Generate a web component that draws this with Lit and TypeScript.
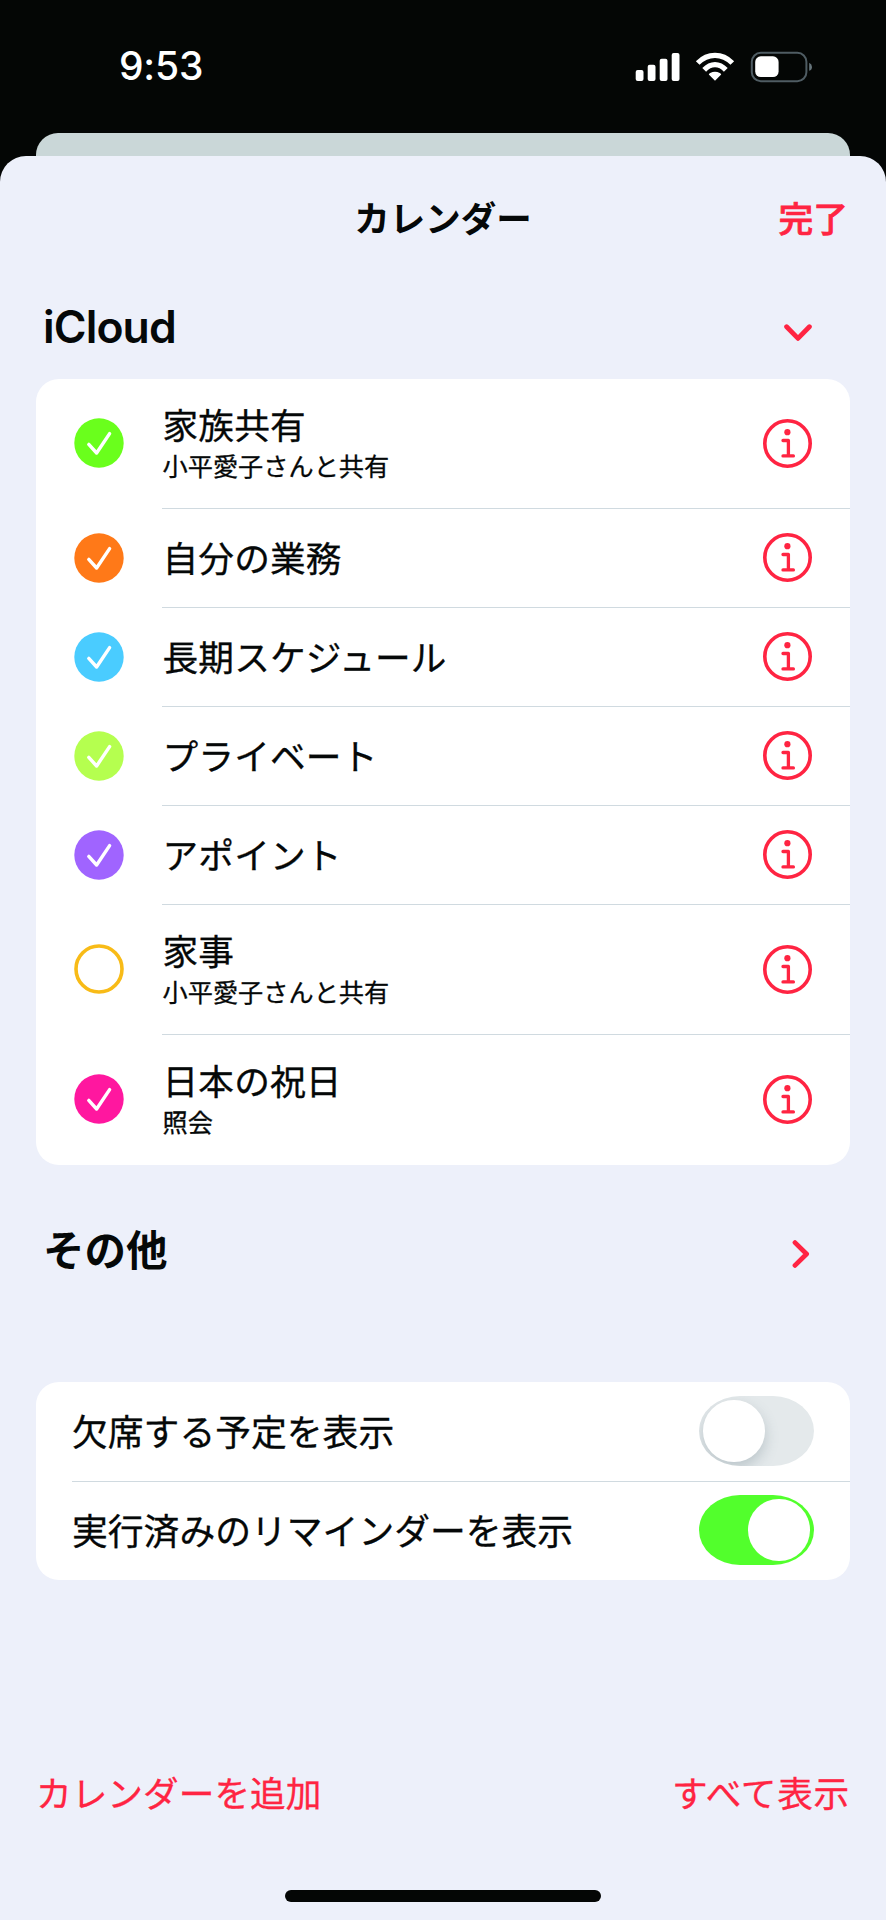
import { LitElement, html, css, svg, nothing } from "lit";
import { customElement, property, state } from "lit/decorators.js";
import { classMap } from "lit/directives/class-map.js";

interface CalendarEntry {
  name: string;
  note?: string;
  color: string;
  checked: boolean;
}

const CALENDARS: CalendarEntry[] = [
  { name: "家族共有", note: "小平愛子さんと共有", color: "#6aff1c", checked: true },
  { name: "自分の業務", color: "#ff7918", checked: true },
  { name: "長期スケジュール", color: "#4accff", checked: true },
  { name: "プライベート", color: "#b5ff4f", checked: true },
  { name: "アポイント", color: "#a064ff", checked: true },
  { name: "家事", note: "小平愛子さんと共有", color: "#f8bb17", checked: false },
  { name: "日本の祝日", note: "照会", color: "#ff179f", checked: true },
];

@customElement("status-bar")
class StatusBar extends LitElement {
  static styles = css`
    :host {
      display: flex;
      justify-content: space-between;
      align-items: center;
      height: 133px;
      padding: 0 73px 0 119px;
      box-sizing: border-box;
    }
    .time {
      margin-bottom: 2px;
      font: 500 39px/46px Inter, sans-serif;
      letter-spacing: -0.2px;
      color: #fff;
    }
    .icons {
      display: block;
    }
  `;
  render() {
    return html`
      <span class="time">9:53</span>
      <svg class="icons" width="178" height="32" viewBox="635 50 178 32">
        <g fill="#fff">
          <rect x="635.7" y="69" width="7.8" height="11" rx="2" />
          <rect x="647.7" y="63.7" width="7.8" height="16.3" rx="2" />
          <rect x="659.7" y="57.8" width="7.8" height="22.2" rx="2" />
          <rect x="671.7" y="52" width="7.8" height="28" rx="2" />
          <path d="M715 79.8 L708.8 73.6 Q708.9 72.5 710.2 72 Q715 69.4 719.8 72 Q721.1 72.5 721.2 73.6 Z" />
        </g>
        <g fill="none" stroke="#fff" stroke-width="5.2">
          <path d="M704.2 68.9 Q709.1 63.7 715 63.7 Q720.9 63.7 725.8 68.9" />
          <path d="M697.7 62 Q705.3 54.4 715 54.4 Q724.7 54.4 732.3 62" />
        </g>
        <rect x="751.8" y="51.8" width="54.6" height="28.4" rx="9" fill="none" stroke="#4f5c63" stroke-width="2" />
        <rect x="755.2" y="55.3" width="23.4" height="20.8" rx="5.6" fill="#fff" />
        <path d="M809.2 61.7 Q812 63 812 66 Q812 69 809.2 69.8 Z" fill="#66747b" />
      </svg>
    `;
  }
}

@customElement("calendar-row")
class CalendarRow extends LitElement {
  @property({ attribute: false }) entry!: CalendarEntry;

  static styles = css`
    :host {
      display: flex;
      align-items: center;
      padding-left: 38px;
    }
    .mark {
      flex: none;
      display: block;
      margin-right: 38.5px;
    }
    .body {
      flex: 1;
      align-self: stretch;
      display: flex;
      align-items: center;
      justify-content: space-between;
      padding-right: 38.5px;
    }
    .name {
      font-size: 35.7px;
      line-height: 44px;
      letter-spacing: 0.15px;
    }
    .note {
      padding-top: 1px;
      font-size: 25.2px;
      line-height: 36px;
    }
    .labels {
      margin-bottom: 2px;
      white-space: nowrap;
      -webkit-text-stroke: 0.3px currentColor;
    }
    .info {
      flex: none;
      display: block;
    }
  `;
  render() {
    const { name, note, color, checked } = this.entry;
    return html`
      <svg class="mark" width="50" height="50" viewBox="0 0 50 50">
        ${checked
          ? svg`<circle cx="25" cy="25" r="24.7" fill=${color} />
              <path d="M14.8 26.4 L22.6 35 L35.6 15.6" fill="none" stroke="#fff" stroke-width="3.4"
                stroke-linecap="round" stroke-linejoin="round" />`
          : svg`<circle cx="25" cy="25" r="23" fill="none" stroke=${color} stroke-width="3.6" />`}
      </svg>
      <div class="body">
        <div class="labels">
          <div class="name">${name}</div>
          ${note ? html`<div class="note">${note}</div>` : nothing}
        </div>
        <svg class="info" width="49" height="49" viewBox="0 0 49 49">
          <circle cx="24.5" cy="24.5" r="22.7" fill="none" stroke="#ff2442" stroke-width="3.6" />
          <circle cx="24.4" cy="13.2" r="3.1" fill="#ff2442" />
          <path d="M20 21.5 H25.4 V36.9 M20 36.9 H30.4" fill="none" stroke="#ff2442" stroke-width="3.3"
            stroke-linecap="round" stroke-linejoin="round" />
        </svg>
      </div>
    `;
  }
}

@customElement("toggle-switch")
class ToggleSwitch extends LitElement {
  @property({ type: Boolean }) on = false;

  static styles = css`
    .track {
      display: flex;
      align-items: center;
      width: 115px;
      height: 70px;
      padding: 0 4.2px;
      box-sizing: border-box;
      border-radius: 41px / 35px;
      background: #e4e9eb;
      overflow: hidden;
    }
    .track.on {
      justify-content: flex-end;
      background: #52ff2c;
    }
    .knob {
      width: 61.5px;
      height: 61.5px;
      border-radius: 50%;
      background: #fff;
      box-shadow: 0 6px 14px rgba(80, 105, 115, 0.28);
    }
    .on .knob {
      box-shadow: none;
    }
  `;
  render() {
    return html`<div class=${classMap({ track: true, on: this.on })}><div class="knob"></div></div>`;
  }
}

@customElement("app-root")
class AppRoot extends LitElement {
  @state() private calendars = CALENDARS;

  static styles = css`
    :host {
      display: block;
      width: 886px;
      height: 1920px;
      overflow: hidden;
      background: #040605;
      color: #050808;
      font-family: "Noto Sans CJK JP", sans-serif;
    }
    .behind {
      height: 44px;
      margin: 0 36px -21.5px;
      border-radius: 22px 22px 0 0;
      background: #cad7d8;
    }
    .sheet {
      position: relative;
      display: flex;
      flex-direction: column;
      height: 1764.5px;
      box-sizing: border-box;
      padding: 0 36px;
      border-radius: 26px 26px 0 0;
      background: #edf0fa;
    }
    .nav {
      display: grid;
      grid-template-columns: 1fr auto 1fr;
      align-items: center;
      height: 119px;
      padding-top: 2px;
      font-size: 35.5px;
      font-weight: 700;
      line-height: 52px;
    }
    .title {
      grid-column: 2;
    }
    .done {
      justify-self: end;
      padding-right: 2px;
      font-size: 34.8px;
      font-weight: 500;
      -webkit-text-stroke: 0.7px currentColor;
      color: #ff2442;
    }
    .section {
      display: flex;
      align-items: center;
      justify-content: space-between;
      padding: 0 38px 0 7px;
      font-size: 41.5px;
      font-weight: 700;
      line-height: 60px;
    }
    .cloud {
      height: 102px;
      font-family: Inter, sans-serif;
      font-size: 44.5px;
      font-weight: 600;
      letter-spacing: -0.9px;
      line-height: 54px;
    }
    .cloud-label {
      margin-bottom: 2px;
    }
    .other {
      height: 217px;
      padding-right: 40px;
    }
    .other-label {
      margin-bottom: 51px;
    }
    .other .chevron {
      margin-bottom: 39px;
    }
    .cloud .chevron {
      margin-top: 10px;
    }
    .chevron {
      display: block;
      fill: none;
      stroke: #ff2442;
      stroke-width: 4.8;
      stroke-linecap: round;
      stroke-linejoin: round;
    }
    .card {
      flex: none;
      border-radius: 23px;
      background: #fff;
    }
    .row {
      height: 99px;
    }
    .row.tall {
      height: 130px;
    }
    .row.tall:first-child {
      height: 129.5px;
    }
    .row.tall:last-child {
      height: 130.5px;
    }
    .line {
      background: linear-gradient(#d0dae0, #d0dae0) 100% 0 / calc(100% - 126px) 1px no-repeat;
    }
    .option {
      display: flex;
      align-items: center;
      justify-content: space-between;
      height: 99px;
      padding: 0 36px;
      font-size: 35.8px;
    }
    .option-label {
      margin-bottom: 3px;
      -webkit-text-stroke: 0.3px currentColor;
    }
    .option.ruled {
      background: linear-gradient(#d0dae0, #d0dae0) 100% 0 / calc(100% - 36px) 1px no-repeat;
    }
    .footer {
      display: flex;
      justify-content: space-between;
      margin-top: 186px;
      font-size: 35.7px;
      line-height: 52px;
      -webkit-text-stroke: 0.3px currentColor;
      color: #ff2442;
    }
    .show-all {
      letter-spacing: 0.7px;
    }
    .home {
      width: 316px;
      height: 12px;
      margin: auto auto 18px;
      border-radius: 6px;
      background: #040605;
    }
  `;

  render() {
    return html`
      <status-bar></status-bar>
      <div class="behind"></div>
      <main class="sheet">
        <header class="nav">
          <span class="title">カレンダー</span>
          <span class="done">完了</span>
        </header>
        <div class="section cloud">
          <span class="cloud-label">iCloud</span>
          <svg class="chevron" width="28" height="18" viewBox="0 0 28 18">
            <path d="M2.6 2.8 L14 14.4 L25.4 2.8" />
          </svg>
        </div>
        <section class="card">
          ${this.calendars.map(
            (entry, i) => html`<calendar-row
              class=${classMap({ row: true, tall: !!entry.note, line: i > 0 })}
              .entry=${entry}
            ></calendar-row>`
          )}
        </section>
        <div class="section other">
          <span class="other-label">その他</span>
          <svg class="chevron" width="18" height="28" viewBox="0 0 18 28">
            <path d="M3 2.6 L14.6 14 L3 25.4" />
          </svg>
        </div>
        <section class="card">
          <div class="option">
            <span class="option-label">欠席する予定を表示</span><toggle-switch></toggle-switch>
          </div>
          <div class="option ruled">
            <span class="option-label">実行済みのリマインダーを表示</span><toggle-switch on></toggle-switch>
          </div>
        </section>
        <footer class="footer">
          <span>カレンダーを追加</span>
          <span class="show-all">すべて表示</span>
        </footer>
        <div class="home"></div>
      </main>
    `;
  }
}
